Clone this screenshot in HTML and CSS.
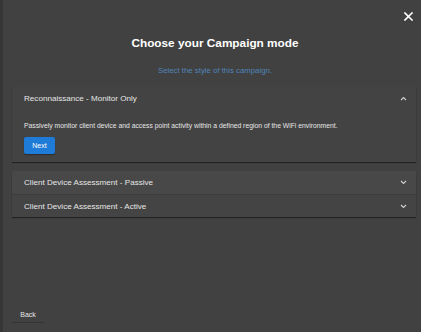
FILE: index.html
```html
<!DOCTYPE html>
<html>
<head>
<meta charset="utf-8">
<link rel="stylesheet" href="styles.css">
</head>
<body>
<div class="dialog">
  <div class="topbar">
    <button class="close" aria-label="Close">
      <svg width="9" height="9" viewBox="0 0 9 9"><path d="M1 1L8 8M8 1L1 8" stroke="#ffffff" stroke-width="1.6" stroke-linecap="square"/></svg>
    </button>
  </div>
  <h1 class="title">Choose your Campaign mode</h1>
  <p class="subtitle">Select the style of this campaign.</p>
  <div class="accordion">
    <section class="panel expanded">
      <div class="panel-head">
        <span>Reconnaissance - Monitor Only</span>
        <svg class="chev" width="7" height="5" viewBox="0 0 7 5"><path d="M1 4L3.5 1.5L6 4" fill="none" stroke="#cfcfcf" stroke-width="1.1"/></svg>
      </div>
      <div class="panel-body">
        <p class="desc">Passively monitor client device and access point activity within a defined region of the WiFi environment.</p>
        <button class="next">Next</button>
      </div>
    </section>
    <div class="group">
      <section class="panel hover">
        <div class="panel-head">
          <span>Client Device Assessment - Passive</span>
          <svg class="chev" width="7" height="5" viewBox="0 0 7 5"><path d="M1 1L3.5 3.5L6 1" fill="none" stroke="#cfcfcf" stroke-width="1.1"/></svg>
        </div>
      </section>
      <section class="panel last">
        <div class="panel-head">
          <span>Client Device Assessment - Active</span>
          <svg class="chev" width="7" height="5" viewBox="0 0 7 5"><path d="M1 1L3.5 3.5L6 1" fill="none" stroke="#cfcfcf" stroke-width="1.1"/></svg>
        </div>
      </section>
    </div>
  </div>
  <div class="footer">
    <button class="back">Back</button>
  </div>
</div>
</body>
</html>
```

FILE: styles.css
```css
html, body {
  margin: 0;
  padding: 0;
  height: 100%;
}
body {
  background: #414141;
  font-family: "Liberation Sans", Arial, sans-serif;
  color: #e6e6e6;
}
.dialog {
  box-sizing: border-box;
  width: 421px;
  height: 332px;
  border-left: 3px solid #363636;
  display: flex;
  flex-direction: column;
}
.topbar {
  display: flex;
  justify-content: flex-end;
  padding: 12px 8px 0 0;
  height: 9px;
}
.close {
  background: none;
  border: 0;
  padding: 0;
  width: 9px;
  height: 9px;
  display: block;
}
.close svg { display: block; }
.title {
  margin: 14px 0 0;
  padding-left: 6px;
  text-align: center;
  font-size: 11.8px;
  line-height: 16px;
  font-weight: bold;
  color: #ffffff;
}
.subtitle {
  margin: 15px 0 0;
  padding-left: 6px;
  text-align: center;
  font-size: 7.8px;
  line-height: 10px;
  color: #4f85b8;
}
.accordion {
  margin: 11px 5px 0 9px;
}
.panel {
  background: #434343;
}
.panel.expanded {
  box-shadow: 0 1px 1px rgba(0,0,0,0.45);
  margin-bottom: 9px;
}
.panel-head {
  display: flex;
  align-items: center;
  justify-content: space-between;
  height: 22px;
  padding: 0 9px 0 12px;
  font-size: 8.1px;
}
.chev { display: block; }
.panel-body {
  padding: 12px 12px 8px;
}
.desc {
  margin: 0;
  font-size: 6.8px;
  line-height: 10px;
  color: #e6e6e6;
}
.next {
  margin-top: 6px;
  width: 31px;
  height: 17px;
  border: 0;
  border-radius: 2px;
  background: #1f7bd8;
  color: #ffffff;
  font-family: "Liberation Sans", Arial, sans-serif;
  font-size: 7px;
  padding: 0;
  box-shadow: 0 1px 1px rgba(0,0,0,0.35);
}
.group {
  box-shadow: 0 1px 1px rgba(0,0,0,0.45);
}
.panel.hover {
  background: #484848;
  height: 23px;
}
.panel.hover .panel-head { height: 23px; }
.panel.last {
  border-top: 1px solid #3d3d3d;
  background: #444444;
}
.footer {
  margin-top: auto;
  padding: 0 0 9px 9px;
}
.back {
  background: none;
  border: 0;
  border-bottom: 1px solid #333333;
  color: #e6e6e6;
  font-family: "Liberation Sans", Arial, sans-serif;
  font-size: 7px;
  padding: 0 8px 4px;
  width: 32px;
  height: 13px;
}
```
